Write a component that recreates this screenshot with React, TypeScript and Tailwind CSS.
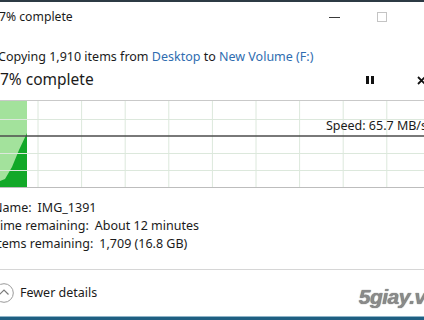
import React from 'react';

const gridX = [38, 81.6, 125.2, 168.8, 212.4, 256, 299.6, 343.2, 386.8];
const gridY = [19, 53, 70];

const details = [
  { label: 'Name:', value: 'IMG_1391' },
  { label: 'Time remaining:', value: 'About 12 minutes' },
  { label: 'Items remaining:', value: '1,709 (16.8 GB)' },
];

const Graph: React.FC = () => (
  <div className="relative h-[88px] shrink-0">
    <svg width="424" height="88" className="block">
      <rect x="0" y="0" width="27" height="88" fill="#a3e29c" />
      <path d="M0,87 L0,81 L5,79 L12,67 L19,50 L27,33 L27,87 Z" fill="#12a828" />
      {gridX.map((x) => (
        <line key={x} x1={x} y1="0" x2={x} y2="88" stroke="#dce8dc" strokeWidth="1" />
      ))}
      {gridY.map((y) => (
        <line key={y} x1="0" y1={y + 0.5} x2="424" y2={y + 0.5} stroke="#dce8dc" strokeWidth="1" />
      ))}
      <line x1="0" y1="0.5" x2="424" y2="0.5" stroke="#c9c9c9" strokeWidth="1" />
      <line x1="0" y1="87.5" x2="424" y2="87.5" stroke="#bdbdbd" strokeWidth="1" />
      <line x1="0" y1="36" x2="424" y2="36" stroke="#4d4d4d" strokeWidth="1.5" />
    </svg>
    <div className="absolute right-[-3px] top-[17px] h-[17px] leading-[17px] text-[12.5px] text-[#1b1b1b] whitespace-nowrap">
      Speed: 65.7 MB/s
    </div>
  </div>
);

const App: React.FC = () => {
  return (
    <div className="w-[424px] h-[320px] overflow-hidden bg-white flex flex-col relative font-['Noto_Sans',sans-serif] text-[#1b1b1b]">
      <div className="h-[2px] shrink-0 bg-[#2c3a44]" />

      {/* title bar */}
      <div className="h-[30px] shrink-0 flex items-center mr-[-28px]">
        <div className="flex-1 text-[12.2px] leading-none ml-[-1px] whitespace-nowrap">7% complete</div>
        <div className="w-[47px] h-full flex items-center justify-center">
          <div className="w-[11px] h-px bg-[#3a3a3a]" />
        </div>
        <div className="w-[47px] h-full flex items-center justify-center">
          <div className="w-[10px] h-[10px] border border-[#c4c4c4]" />
        </div>
        <div className="w-[47px] h-full" />
      </div>

      <div className="mt-[16px] h-[18px] shrink-0 flex items-center text-[12.5px] ml-[-2px] whitespace-nowrap">
        Copying 1,910 items from&nbsp;<span className="text-[#2f6db0]">Desktop</span>&nbsp;to&nbsp;
        <span className="text-[#2f6db0]">New Volume (F:)</span>
      </div>

      <div className="mt-[2px] h-[24px] shrink-0 flex items-center">
        <div className="flex-1 text-[15.5px] whitespace-nowrap">7% complete</div>
        <div className="flex gap-[2px] mr-[43px]">
          <div className="w-[3px] h-[8px] bg-[#111]" />
          <div className="w-[3px] h-[8px] bg-[#111]" />
        </div>
        <svg width="9" height="9" viewBox="0 0 9 9" className="mr-[-2px]">
          <path d="M1,1 L8,8 M8,1 L1,8" stroke="#111" strokeWidth="1.8" />
        </svg>
      </div>

      <div className="mt-[8px]">
        <Graph />
      </div>

      <div className="mt-[11px] flex flex-col ml-[-7px] text-[12.5px]">
        {details.map((d) => (
          <div key={d.label} className="h-[18px] flex items-center whitespace-nowrap">
            <span>{d.label}</span>
            <span className="ml-[6px]">{d.value}</span>
          </div>
        ))}
      </div>

      <div className="mt-[16px] h-px shrink-0 bg-[#d6d6d6]" />

      <div className="h-[46px] shrink-0 flex items-center">
        <svg width="20" height="20" viewBox="0 0 20 20" className="ml-[-6px]">
          <circle cx="10" cy="10" r="9.3" fill="none" stroke="#9a9a9a" strokeWidth="1" />
          <path d="M5.5,11.5 L10,7 L14.5,11.5" fill="none" stroke="#7a7a7a" strokeWidth="1.2" />
        </svg>
        <span className="ml-[6px] text-[12.5px]">Fewer details</span>
      </div>

      <div className="h-[4px] shrink-0 bg-[#1f5f82] border-t border-[#8fb4c8]" />

      <div className="absolute right-[-14px] top-[281px] text-[21px] font-bold italic text-[#8a8a8a] tracking-[-0.5px] [text-shadow:0_0_1px_#555,1px_1px_0_#ffffff] font-['Liberation_Sans',sans-serif]">
        5giay.vn
      </div>
    </div>
  );
};

export default App;
